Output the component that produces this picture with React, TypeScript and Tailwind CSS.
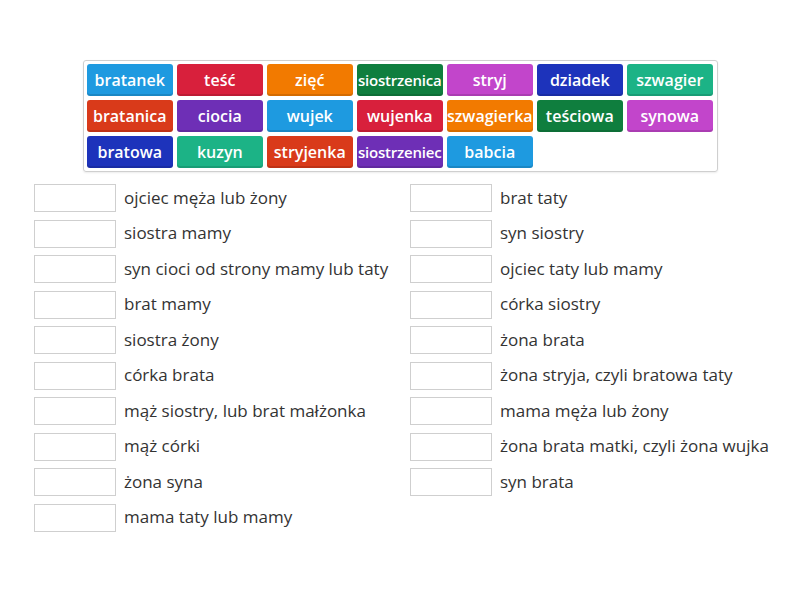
import React from "react";

const tiles = [
  "bratanek", "teść", "zięć", "siostrzenica", "stryj", "dziadek", "szwagier",
  "bratanica", "ciocia", "wujek", "wujenka", "szwagierka", "teściowa", "synowa",
  "bratowa", "kuzyn", "stryjenka", "siostrzeniec", "babcia",
];

const colors = [
  "bg-[#1e9ae0]",
  "bg-[#d8203c]",
  "bg-[#f27a00]",
  "bg-[#0f7e3e]",
  "bg-[#c245cb]",
  "bg-[#1d33bb]",
  "bg-[#1cb386]",
  "bg-[#d93a1a]",
  "bg-[#6e2fb6]",
];

const left = [
  "ojciec męża lub żony",
  "siostra mamy",
  "syn cioci od strony mamy lub taty",
  "brat mamy",
  "siostra żony",
  "córka brata",
  "mąż siostry, lub brat małżonka",
  "mąż córki",
  "żona syna",
  "mama taty lub mamy",
];

const right = [
  "brat taty",
  "syn siostry",
  "ojciec taty lub mamy",
  "córka siostry",
  "żona brata",
  "żona stryja, czyli bratowa taty",
  "mama męża lub żony",
  "żona brata matki, czyli żona wujka",
  "syn brata",
];

function Row({ text }: { text: string }) {
  return (
    <div className="flex items-center h-[28px] mb-[7.5px]">
      <div className="w-[82px] h-[28px] border border-[#cfcfcf] bg-white shrink-0" />
      <span className="ml-[8px] text-[17px] text-[#333] whitespace-nowrap leading-none -mt-[2px]">{text}</span>
    </div>
  );
}

export default function App() {
  return (
    <div
      className="w-[800px] h-[600px] bg-white overflow-hidden"
      style={{ fontFamily: '"Open Sans", "Noto Sans", sans-serif' }}
    >
      <div className="pt-[60px] flex justify-center">
        <div className="w-[635px] border border-[#cfcfcf] rounded-[3px] p-[3px] shadow-[0_1px_2px_rgba(0,0,0,0.08)]">
          <div className="grid grid-cols-[repeat(7,86.5px)] gap-x-[3.5px] gap-y-[4px]">
            {tiles.map((t, i) => (
              <div
                key={t}
                className={`${colors[i % 9]} h-[32px] rounded-[3px] flex items-center justify-center text-white font-semibold ${t.length > 10 ? "text-[15px] tracking-[-0.2px]" : "text-[16px]"} whitespace-nowrap overflow-hidden shadow-[inset_0_-2px_0_rgba(0,0,0,0.12)]`}
              >
                {t}
              </div>
            ))}
          </div>
        </div>
      </div>
      <div className="flex pl-[34px] pt-[12px]">
        <div className="w-[376px]">
          {left.map((t) => (
            <Row key={t} text={t} />
          ))}
        </div>
        <div>
          {right.map((t) => (
            <Row key={t} text={t} />
          ))}
        </div>
      </div>
    </div>
  );
}
